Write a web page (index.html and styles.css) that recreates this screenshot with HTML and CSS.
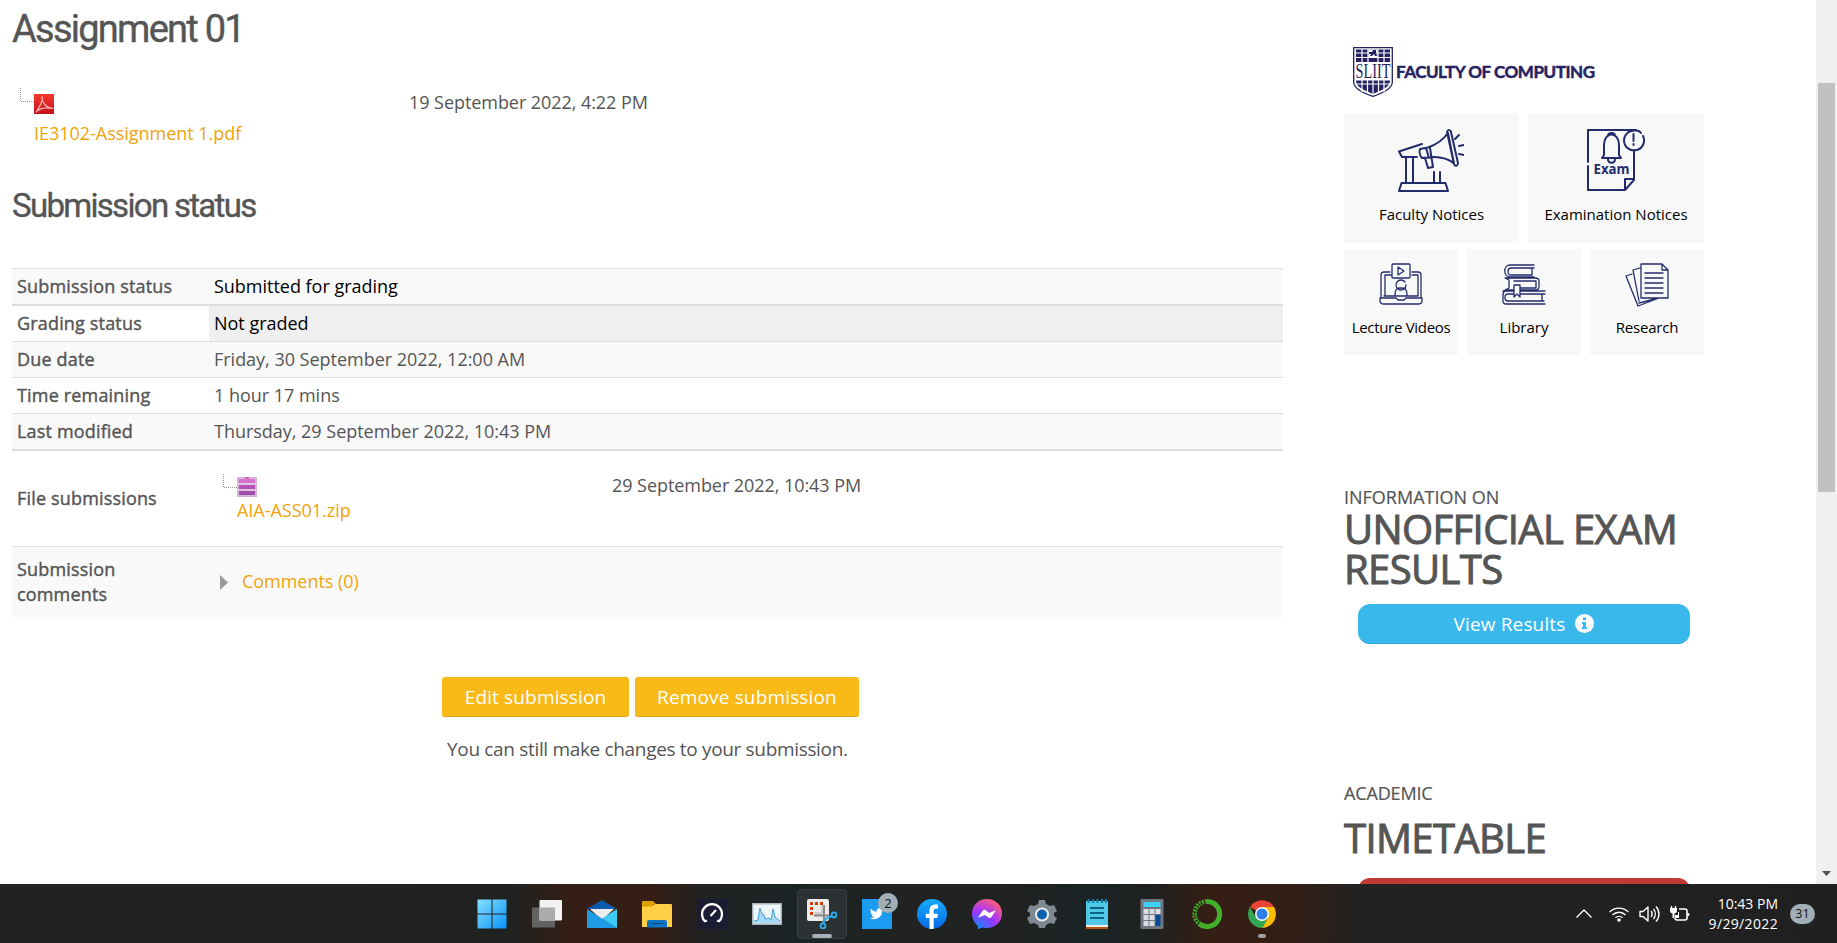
FILE: index.html
```html
<!DOCTYPE html>
<html lang="en">
<head>
<meta charset="utf-8">
<title>Assignment 01</title>
<link rel="stylesheet" href="styles.css">
</head>
<body>
<div class="screen">
<div class="browser">
<main class="main">
  <h1 class="title">Assignment 01</h1>
  <div class="file file-pdf">
    <svg class="tree" width="14" height="16" viewBox="0 0 14 16"><path d="M.5 0V13.5H14" fill="none" stroke="#999" stroke-dasharray="1 1"/></svg>
    <div class="file-body">
      <svg width="20" height="20" viewBox="0 0 20 20"><defs><linearGradient id="pdf" x2="0" y2="1"><stop stop-color="#f6392e"/><stop offset="1" stop-color="#c4101c"/></linearGradient></defs><path d="M0 0h20v20H0z" fill="url(#pdf)"/><path d="M7.500 2.500c2 0 1 6-5.500 16M8 3c0 5 3 10.500 11 11.500M3 17c4-3 9-4 16-2.500" fill="none" stroke="#f9b5b2" stroke-width="1.200"/></svg>
      <a class="link">IE3102-Assignment 1.pdf</a>
    </div>
    <div class="date">19 September 2022, 4:22 PM</div>
  </div>
  <h2 class="subtitle">Submission status</h2>
  <div class="table">
    <div class="row alt r1"><div class="th">Submission status</div><div class="td dark">Submitted for grading</div></div>
    <div class="row r2"><div class="th">Grading status</div><div class="td dark grey">Not graded</div></div>
    <div class="row alt"><div class="th">Due date</div><div class="td">Friday, 30 September 2022, 12:00 AM</div></div>
    <div class="row"><div class="th">Time remaining</div><div class="td">1 hour 17 mins</div></div>
    <div class="row alt"><div class="th">Last modified</div><div class="td">Thursday, 29 September 2022, 10:43 PM</div></div>
    <div class="row r6"><div class="th">File submissions</div>
      <div class="td zip">
        <svg class="tree" width="14" height="16" viewBox="0 0 14 16"><path d="M.5 0V13.500H14" fill="none" stroke="#999" stroke-dasharray="1 1"/></svg>
        <div class="file-body">
          <svg width="20" height="20" viewBox="0 0 20 20"><path d="M0 0h20v20H0z" fill="#d5b3dc"/><path d="M2 2h16v4H2z" fill="#d873c9"/><path d="M2 8h16v4H2z" fill="#b452b5"/><path d="M2 14h16v4H2z" fill="#a04cab"/><path d="M0 7h20M0 13h20" stroke="#ead5ed"/><path d="M8 0h4v2H8z" fill="#d95fb8"/></svg>
          <a class="link">AIA-ASS01.zip</a>
        </div>
        <div class="date">29 September 2022, 10:43 PM</div>
      </div>
    </div>
    <div class="row alt r7"><div class="th">Submission<br>comments</div>
      <div class="td comments"><svg width="8" height="15" viewBox="0 0 8 15"><path d="M0 0l8 7.500L0 15z" fill="#999"/></svg><a class="link">Comments (0)</a></div>
    </div>
  </div>
  <div class="actions"><button class="btn edit">Edit submission</button><button class="btn remove">Remove submission</button></div>
  <p class="note">You can still make changes to your submission.</p>
</main>
<aside class="side">
  <div class="brand">
    <svg width="40" height="50" viewBox="0 0 40 50"><path d="M.7.700h38.600V35c0 7-9 11-19.300 14.300C9.700 46 .7 42 .7 35z" fill="#fff" stroke="#262262" stroke-width="1.300"/><path d="M3 2.500h34v12.500H3zM3 33.500h34c0 6-6 9-17 13.500C9 42.500 3 39.500 3 33.500z" fill="#262262"/><path d="M9 2v13M15 2v13M25 2v13M31 2v13M3 6h12M25 6h12M3 10.500h34M9 33v12M14.500 33v13M20 33v14M25.500 33v13M31 33v12M3 37h34" stroke="#fff" stroke-width="1.200"/><path d="M15.500 2.500h9V10h-9z" fill="#fff"/><path d="M16 5h3l1-2h3v2l1 4h-2l-1-2-2 2h-2l1-2h-2z" fill="#262262"/><text x="20" y="31" text-anchor="middle" textLength="35" lengthAdjust="spacingAndGlyphs" class="sliit">SLIIT</text></svg>
    <span class="brand-name">FACULTY OF COMPUTING</span>
  </div>
  <div class="tiles two">
    <div class="tile">
      <svg width="66" height="64" viewBox="0 0 66 64" class="ico w2 shift"><path d="M24 15L1 22.500l3 5.500h15M8 28v26M15 28v26M1 62l2.500-8h44L50 62zM36 43v11M42 43v11M22 20c-1 3 0 7 2 9l6-.5c8-1 18-.500 26 6L50 4c-5 7-10 11-20 14.500zM28 19l3 10M27 29l3 10 5-1-3-19M49 3c1-3 4-2 4 0l7 31c0 3-3 4-4 1zM57 10l4-4M61 17l5-1M61 25l5 1"/></svg>
      <span class="tile-label">Faculty Notices</span>
    </div>
    <div class="tile">
      <svg width="58" height="62" viewBox="0 0 58 62" class="ico w2"><path d="M1 33V1h48M1 37v24h37l9-10V21M38 61V50h9M49 1.500c2 0 4 1 5 2.500M56 7a10 10 0 1 1-8-5.500M46.500 5v7M46.500 15v1M17 26V16c0-14 15-14 15 0v10l2 3H15zM21 7c0-4 7-4 7 0M21 30c0 5 7 5 7 0"/><text x="24.500" y="45" text-anchor="middle" textLength="36" lengthAdjust="spacingAndGlyphs" class="exam">Exam</text></svg>
      <span class="tile-label">Examination Notices</span>
    </div>
  </div>
  <div class="tiles three">
    <div class="tile">
      <svg width="44" height="42" viewBox="0 0 44 42" class="ico"><path d="M11 9H5q-3 0-3 3v23M42 35V12q0-3-3-3h-6M12 12H6v21M39 33V12h-6M14 1h16q1 0 1 1v12q0 1-1 1H14q-1 0-1-1V2q0-1 1-1zM19 4v8l6-4zM1 35h16l2 2h6l2-2h16v3q0 3-4 3H5q-4 0-4-3zM5 33h34M16 32c0-6 2-7 6-7s6 1 6 7M27 22a5 5 0 1 1-1-3"/></svg>
      <span class="tile-label lecture">Lecture Videos</span>
    </div>
    <div class="tile">
      <svg width="44" height="42" viewBox="0 0 44 42" class="ico"><path d="M32 2H8C1 2 1 14 8 14h24M32 5H9c-4 0-4 7 0 7h21M30 5v7M3 15h30q4 0 4 3v6q0 3-4 3H3l4-2V17zM12 18h22v7H18M1 28h42M43 41H4q-3 0-3-3v-6q0-4 3-4M43 31H6q-3 0-3 3v1q0 3 3 3h36M40 31v7"/><path d="M12 22v12l3-3 3 3V22z" fill="#f8f8f8"/></svg>
      <span class="tile-label">Library</span>
    </div>
    <div class="tile">
      <svg width="44" height="44" viewBox="0 0 44 44" class="ico"><path d="M17 1h20l6 6v28H16V1M37 1v6h6M20 10h18M20 15h18M20 20h18M20 25h18M20 30h18M15 5l-7 2 6 31M7 11l-6 2 12 30 21-8M14 40l16-4"/></svg>
      <span class="tile-label research">Research</span>
    </div>
  </div>
  <div class="kicker k1">INFORMATION ON</div>
  <div class="big">UNOFFICIAL EXAM<br>RESULTS</div>
  <div class="pill"><span>View Results</span><svg width="19" height="19" viewBox="0 0 19 19"><circle cx="9.500" cy="9.500" r="9.500" fill="#fff"/><path d="M8 3.500h3v2.700H8zM7 8h4v5h1v2H7v-2h1v-3H7z" fill="#38b8eb"/></svg></div>
  <div class="kicker k2">ACADEMIC</div>
  <div class="big b2">TIMETABLE</div>
  <div class="pill red"></div>
</aside>
<div class="scroll"><div class="thumb"></div><svg width="9" height="5" viewBox="0 0 9 5"><path d="M0 0h9L4.500 5z" fill="#505050"/></svg></div>
</div>
<footer class="taskbar">
  <div class="apps">
    <div class="app"><svg width="30" height="30" viewBox="0 0 30 30"><defs><linearGradient id="win" x2="1" y2="1"><stop stop-color="#86e0ff"/><stop offset="1" stop-color="#0a93f9"/></linearGradient></defs><path d="M.5.500h14v14H.5zM15.500.500h14v14h-14zM.5 15.500h14v14H.5zM15.500 15.500h14v14h-14z" fill="url(#win)"/></svg></div>
    <div class="app"><svg width="30" height="30" viewBox="0 0 30 30"><rect y="8.500" width="23" height="20" rx="1" fill="#626262"/><rect x="7.500" y="1" width="22.500" height="20.500" rx="1" fill="#f2f2f2"/><path d="M7.500 8.500H23v13H7.500z" fill="#ababab"/></svg></div>
    <div class="app"><svg width="30" height="30" viewBox="0 0 30 30"><path d="M0 10L15 1l15 9z" fill="#0a5cab"/><path d="M3 10h24L15 21z" fill="#ededed"/><path d="M0 10l30 19H0z" fill="#1f9be6"/><path d="M30 10v19L15 19.500z" fill="#3dcbf5"/></svg></div>
    <div class="app"><svg width="30" height="30" viewBox="0 0 30 30"><path d="M0 9V3q0-1 1-1h10l3 3h-2l-3 4z" fill="#dda000"/><path d="M0 7.500h9L13 5h16q1 0 1 1v22H0z" fill="#ffcf45"/><path d="M5 28.500V23q0-2 2-2h16q2 0 2 2v5.500z" fill="#0e75c4"/><path d="M9 24.500h12" stroke="#084a86"/></svg></div>
    <div class="app"><svg width="30" height="30" viewBox="0 0 30 30"><path d="M0 0h30v30H0z" fill="#1b1b31"/><path d="M10 21.500l-2 .8A10 10 0 1 1 22 22.300l-2-.8M13.500 17L19 11" fill="none" stroke="#fff" stroke-width="2.200"/></svg></div>
    <div class="app"><svg width="30" height="30" viewBox="0 0 30 30"><path d="M.7 4.700h28.600v20.600H.7z" fill="#edf6fb" stroke="#a8b0b8" stroke-width="1.400"/><path d="M2 22l4-1 2-12 2 6 2 1 1 4 4-1 2 2 2-11 2 8 5 4v2H2z" fill="#a9daf6"/><path d="M2 22l4-1 2-12 2 6 2 1 1 4 4-1 2 2 2-11 2 8 5 4" fill="none" stroke="#459dce"/></svg></div>
    <div class="app active"><svg width="30" height="30" viewBox="0 0 30 30"><rect width="22" height="22" rx="2" fill="#ececec"/><path d="M4.500 16V4.500H17" fill="none" stroke="#d83b01" stroke-width="3" stroke-dasharray="3 2"/><path d="M8 15h8V6" fill="none" stroke="#ccc" stroke-width="4"/><path d="M7 16.500h15M17 6v14l-1 4" fill="none" stroke="#888" stroke-width="2"/><circle cx="27" cy="16" r="2.400" fill="none" stroke="#2ca8e8" stroke-width="2"/><circle cx="16" cy="27" r="2.400" fill="none" stroke="#2ca8e8" stroke-width="2"/><path d="M16.500 24l2-4 6-3" fill="none" stroke="#2ca8e8" stroke-width="2"/></svg><i class="dash"></i></div>
    <div class="app"><svg width="30" height="30" viewBox="0 0 30 30"><path d="M0 0h30v30H0z" fill="#1d9bf0"/><path transform="translate(8 8) scale(.56)" d="M24 4.600a10 10 0 0 1-2.800.8 5 5 0 0 0 2.100-2.700c-1 .6-2 1-3.100 1.200a4.900 4.900 0 0 0-8.400 4.500A14 14 0 0 1 1.700 3.100a4.900 4.900 0 0 0 1.500 6.600c-.8 0-1.600-.3-2.200-.6a4.900 4.900 0 0 0 3.900 4.900c-.7.200-1.500.2-2.200.1a4.900 4.900 0 0 0 4.600 3.400A10 10 0 0 1 0 19.500 14 14 0 0 0 21.500 7c1-.7 1.800-1.500 2.500-2.400z" fill="#fff"/></svg><span class="count">2</span></div>
    <div class="app"><svg width="30" height="30" viewBox="0 0 30 30"><defs><linearGradient id="fb" x2="0" y2="1"><stop stop-color="#18acfe"/><stop offset="1" stop-color="#0768e4"/></linearGradient></defs><circle cx="15" cy="15" r="15" fill="url(#fb)"/><path d="M12.500 30V19H8.800v-4.300h3.700v-3.200c0-4 2.500-6 6-6 1.200 0 2.500.2 2.500.2v3.800h-2c-1.800 0-2.300 1-2.300 2.200v3H21l-.7 4.300h-3.600v11z" fill="#fff"/></svg></div>
    <div class="app"><svg width="30" height="30" viewBox="0 0 30 30"><defs><radialGradient id="ms" cx=".2" cy="1" r="1.100"><stop stop-color="#0a8cff"/><stop offset=".55" stop-color="#a033ff"/><stop offset="1" stop-color="#ff5f75"/></radialGradient></defs><path d="M15 0c8.500 0 15 6.200 15 14.500S23.500 29 15 29c-1.500 0-3-.2-4.300-.6L6 30.200l-.5-3.500C2 23.500 0 19.500 0 14.500 0 6.200 6.500 0 15 0z" fill="url(#ms)"/><path d="M6 18.800l4.500-7c.7-1.100 2.200-1.300 3.200-.500l3.500 2.600 6.800-3-4.500 7.200c-.7 1-2.200 1.300-3.200.5l-3.500-2.600z" fill="#fff"/></svg></div>
    <div class="app"><svg width="30" height="30" viewBox="0 0 30 30"><path d="M12 1h6l1 4 4 2 4-1 3 6-3 2v3l3 2-3 6-4-1-4 2-1 3h-6l-1-3-4-2-4 1-3-6 3-2v-3l-3-2 3-6 4 1 4-2z" fill="#7d8890"/><circle cx="15" cy="15.500" r="7" fill="#eee"/><circle cx="15" cy="15.500" r="5" fill="#0b63ad"/></svg></div>
    <div class="app"><svg width="30" height="30" viewBox="0 0 30 30"><path d="M4 2h22v25H4z" fill="#50c8e8"/><path d="M4 26h22v2H4z" fill="#eee"/><path d="M4 28h22v2H4z" fill="#b5530f"/><path d="M8 9h14M8 14h14M8 19h14" stroke="#0b6488" stroke-width="2"/><path d="M6.500 0v4M11 0v4M15.500 0v4M20 0v4M24 0v4" stroke="#137ea8" stroke-width="2"/></svg></div>
    <div class="app"><svg width="30" height="30" viewBox="0 0 30 30"><rect x="3.500" width="23" height="30" rx="1" fill="#6f7880"/><path d="M6.500 3h17v5h-17z" fill="#3ed0f5"/><path d="M6.500 10h5v5h-5zM12.500 10h5v5h-5zM18.500 10h5v5h-5zM6.500 16h5v5h-5zM12.500 16h5v5h-5zM6.500 22h5v5h-5zM12.500 22h5v5h-5z" fill="#d9dde1"/><path d="M18.500 16h5v11h-5z" fill="#0b4a94"/></svg></div>
    <div class="app"><svg width="30" height="30" viewBox="0 0 30 30"><path d="M15 2.500a12.500 12.500 0 1 1-8 22" fill="none" stroke="#43b02a" stroke-width="5"/><path d="M15 2.500a12.500 12.500 0 0 0-8 22" fill="none" stroke="#43b02a" stroke-width="4.500" stroke-dasharray="2 1"/><path d="M14 4a11 11 0 0 0-7 20" fill="none" stroke="#2c1c14" stroke-width="1" stroke-dasharray="2 2"/></svg></div>
    <div class="app"><svg width="28" height="28" viewBox="0 0 28 28"><path d="M14 14L2 7a14 14 0 0 1 24.100 0z" fill="#ea4335"/><path d="M14 7h12.100A14 14 0 0 1 14 28l6-10.500z" fill="#fbbc05"/><path d="M8 17.500L1.900 7A14 14 0 0 0 14 28l6-10.500z" fill="#34a853"/><circle cx="14" cy="14" r="7" fill="#fff"/><circle cx="14" cy="14" r="5.500" fill="#2f7de9"/></svg><i class="dash small"></i></div>
  </div>
  <div class="tray">
    <svg width="16" height="9" viewBox="0 0 16 9" class="tr"><path d="M.5 8.500L8 1l7.500 7.500"/></svg>
    <svg width="20" height="16" viewBox="0 0 20 16" class="tr wifi"><path d="M.7 6a13 13 0 0 1 18.600 0M3.500 9a9 9 0 0 1 13 0M6.500 11.800a5 5 0 0 1 7 0"/><circle cx="10" cy="14" r="1.800" fill="#fff" stroke="none"/></svg>
    <svg width="21" height="18" viewBox="0 0 21 18" class="tr vol"><path d="M1 6.500h3L9 2v14L4 11.500H1zM12 6a5 5 0 0 1 0 6M14.500 4a8 8 0 0 1 0 10M17 1.500a11 11 0 0 1 0 15"/></svg>
    <svg width="20" height="18" viewBox="0 0 20 18" class="tr bat"><path d="M9 4h6q2 0 2 2v7q0 2-2 2H7q-2 0-2-2M18.500 8v3" stroke-width="1.600"/><path d="M1.500 1v3M5.500 1v3" /><path d="M0 3h7v3q0 2-2.500 2.500V13h-2V8.500Q0 8 0 6zM5 10h3V7h1v6H5z" fill="#fff" stroke="none"/></svg>
    <div class="clock"><div>10:43 PM</div><div class="day">9/29/2022</div></div>
    <span class="badge">31</span>
  </div>
</footer>
</div>
</body>
</html>
```
FILE: styles.css
```css
* { box-sizing: border-box; }
body { margin: 0; background: #fff; overflow: hidden; }
.screen { width: 1837px; height: 943px; display: flex; flex-direction: column; overflow: hidden; font: 18px/26px "Open Sans", sans-serif; color: #555; white-space: nowrap; }
.screen svg { display: block; flex: none; }
.browser { height: 884px; display: flex; overflow: hidden; }
.main { width: 1283px; padding-left: 12px; flex: none; }
.title, .subtitle { margin: 0; font-family: Roboto, sans-serif; font-weight: 400; color: #555; -webkit-text-stroke: .4px #555; }
.title { font-size: 38px; line-height: 44px; padding-top: 7px; height: 86px; letter-spacing: -1.75px; }
.subtitle { font-size: 33px; line-height: 40px; height: 86px; padding-top: 4px; letter-spacing: -1.7px; }
.file { display: flex; }
.file-pdf { height: 96px; padding: 2px 0 0 8px; }
.file-body { padding-top: 6px; }
.file-pdf .file-body { width: 375px; }
.link { color: #f0a30a; display: block; letter-spacing: -.03px; }
.file-pdf .link { padding-top: 6px; }
.file-pdf .date { padding-top: 1px; }
.date { letter-spacing: -.06px; }
.table { width: 1271px; }
.row { display: flex; border-top: 1px solid #ddd; height: 36px; line-height: 35px; }
.alt { background: #f9f9f9; }
.th { width: 197px; padding-left: 5px; flex: none; letter-spacing: .17px; -webkit-text-stroke: .4px #555; }
.td { flex: 1; padding-left: 5px; letter-spacing: -.02px; }
.dark { color: #000; }
.grey { background: #efefef; }
.r2, .r6 { border-top-width: 2px; height: 37px; }
.r6 { height: 97px; line-height: 95px; }
.zip { display: flex; padding: 23px 0 0 14px; line-height: 26px; }
.zip .file-body { width: 375px; padding-top: 3px; }
.zip .date { margin-top: -2px; }
.r7 { height: 71px; line-height: 25px; }
.r7 .th { padding-top: 10px; }
.comments { display: flex; gap: 14px; align-items: center; padding-left: 11px; }
.comments .link { padding-bottom: 1px; }
.actions { display: flex; gap: 6px; padding: 60px 0 0 430px; }
.btn { height: 40px; border: 0; border-bottom: 1px solid #dda41a; border-radius: 3px; background: #f9b917; color: #fff; font: 19px/38px "Open Sans", sans-serif; padding: 0; letter-spacing: .15px; }
.edit { width: 187px; }
.remove { width: 224px; }
.note { margin: 18px 0 0 435px; font-size: 19px; line-height: 28px; letter-spacing: -.33px; }
.side { width: 360px; margin-left: 61px; flex: none; }
.brand { height: 113px; padding: 47px 0 0 9px; display: flex; gap: 3px; }
.brand-name { font: 700 17px/49px "Lato", sans-serif; color: #262262; letter-spacing: -.45px; -webkit-text-stroke: .5px #262262; }
.sliit { font: 20px "Liberation Serif", serif; fill: #262262; }
.exam { font: 700 14px "Open Sans", sans-serif; fill: #232c6b; stroke: none; }
.tiles { display: grid; gap: 9px; }
.two { grid-template-columns: 175px 176px; }
.three { grid-template-columns: repeat(3, 114px); margin-top: 6px; }
.tile { background: #f8f8f8; height: 130px; display: flex; flex-direction: column; align-items: center; justify-content: space-between; padding: 16px 0 16px; color: #000; font-size: 15px; }
.three .tile { height: 106px; padding: 14px 0 18px; line-height: 20px; }
.lecture { letter-spacing: -.3px; }
.research { letter-spacing: -.2px; }
.shift { margin-right: 2px; }
.ico { fill: none; stroke: #232c6b; stroke-width: 1.3; stroke-linejoin: round; stroke-linecap: round; }
.w2 { stroke-width: 2; }
.kicker { color: #555; line-height: 26px; -webkit-text-stroke: .2px #555; }
.k1 { padding-top: 129px; }
.big { font-size: 40px; line-height: 40px; color: #555; margin-top: -1px; letter-spacing: -.62px; -webkit-text-stroke: 1px #555; }
.pill { width: 332px; height: 40px; margin: 15px 0 0 14px; border-radius: 12px; background: #38b8eb; border-bottom: 1px solid #2fa4d4; color: #fff; display: flex; align-items: center; justify-content: center; gap: 10px; font-size: 19px; letter-spacing: .15px; }
.k2 { padding-top: 136px; letter-spacing: -.15px; }
.b2 { margin-top: 12px; }
.red { background: #c13a35; margin-top: 20px; }
.scroll { width: 21px; margin-left: auto; background: #f0f0f0; padding-top: 83px; display: flex; flex-direction: column; align-items: center; justify-content: space-between; padding-bottom: 8px; flex: none; }
.thumb { width: 17px; height: 409px; background: #c1c1c1; }
.taskbar { height: 59px; display: flex; color: #fff; background: linear-gradient(90deg, #222 0, #202222 510px, #361e14 575px, #351e14 650px, #222 700px, #1b2425 800px, #222 900px, #202222 1030px, #1a2425 1090px, #1f2121 1150px, #351e14 1210px, #331f16 1290px, #222 1360px, #202020 100%); }
.apps { display: flex; padding-left: 467px; gap: 5px; align-items: center; }
.app { width: 50px; height: 50px; display: grid; place-items: center; position: relative; border-radius: 5px; }
.active { background: #2c3234; box-shadow: inset 0 0 0 1px #3a3f40; }
.dash { position: absolute; left: 15px; bottom: 1px; width: 20px; height: 4px; border-radius: 2px; background: #a4b1b9; }
.small { left: 21px; width: 8px; background: #a0a0a0; }
.count { position: absolute; left: 26px; top: 4px; width: 20px; height: 20px; border-radius: 10px; background: #a0aeb6; color: #111; font-size: 13px; line-height: 20px; text-align: center; }
.tray { display: flex; align-items: center; margin-left: auto; padding-right: 22px; }
.tr { fill: none; stroke: #fff; stroke-width: 1.4; stroke-linejoin: round; }
.wifi { margin-left: 17px; }
.vol { margin-left: 10px; }
.bat { margin-left: 10px; }
.clock { width: 88px; text-align: right; font-size: 14px; line-height: 20px; }
.day { letter-spacing: .35px; }
.badge { margin-left: 12px; width: 25px; height: 20px; border-radius: 10px; background: #a0aeb6; color: #111; font-size: 12.500px; line-height: 20px; text-align: center; }
```
